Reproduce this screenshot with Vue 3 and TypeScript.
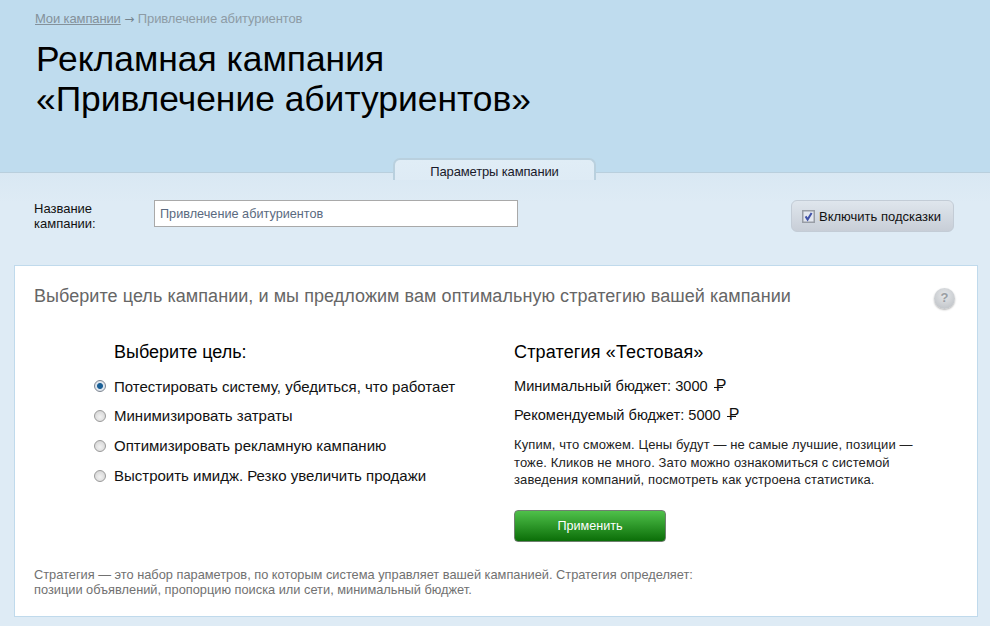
<script setup lang="ts">
interface Goal { label: string; checked: boolean }
const goals: Goal[] = [
  { label: 'Потестировать систему, убедиться, что работает', checked: true },
  { label: 'Минимизировать затраты', checked: false },
  { label: 'Оптимизировать рекламную кампанию', checked: false },
  { label: 'Выстроить имидж. Резко увеличить продажи', checked: false },
]
</script>

<template>
  <div class="page">
    <header class="head">
      <div class="crumbs"><a class="crumb-link">Мои кампании</a> <span class="arrow">→</span> Привлечение абитуриентов</div>
      <h1 class="title">Рекламная кампания<br />«Привлечение абитуриентов»</h1>
      <div class="tab">Параметры кампании</div>
    </header>

    <main class="body">
      <div class="form-row">
        <label class="name-label">Название<br />кампании:</label>
        <div class="name-input">Привлечение абитуриентов</div>
        <div class="hints">
          <svg class="check" width="13" height="13" viewBox="0 0 13 13">
            <rect x="0.75" y="0.75" width="11.5" height="11.5" fill="#e3e7ef" stroke="#989da5" stroke-width="1.5" />
            <path d="M3.6 6.4 L5.6 9.6 L9.6 3" fill="none" stroke="#4052a8" stroke-width="2" />
          </svg>
          <span>Включить подсказки</span>
        </div>
      </div>

      <section class="card">
        <div class="card-head">
          <h2 class="card-title">Выберите цель кампании, и мы предложим вам оптимальную стратегию вашей кампании</h2>
          <span class="help">?</span>
        </div>

        <div class="cols">
          <div class="col-left">
            <h3 class="col-title">Выберите цель:</h3>
            <ul class="goals">
              <li v-for="g in goals" :key="g.label" class="goal">
                <span class="radio" :class="{ on: g.checked }"></span>
                <span>{{ g.label }}</span>
              </li>
            </ul>
          </div>
          <div class="col-right">
            <h3 class="col-title wide">Стратегия «Тестовая»</h3>
            <p class="budget">Минимальный бюджет: 3000 <span class="rub">Р</span></p>
            <p class="budget">Рекомендуемый бюджет: 5000 <span class="rub">Р</span></p>
            <p class="desc">Купим, что сможем. Цены будут — не самые лучшие, позиции — тоже. Кликов не много. Зато можно ознакомиться с системой заведения компаний, посмотреть как устроена статистика.</p>
            <button class="apply" type="button">Применить</button>
          </div>
        </div>

        <p class="foot">Стратегия — это набор параметров, по которым система управляет вашей кампанией. Стратегия определяет:<br />позиции объявлений, пропорцию поиска или сети, минимальный бюджет.</p>
      </section>
    </main>
  </div>
</template>

<style>
html, body { margin: 0; padding: 0; background: #deebf5; }
</style>

<style scoped>
.page {
  width: 990px;
  height: 626px;
  overflow: hidden;
  font-family: "Liberation Sans", Arial, sans-serif;
  background: #deebf5;
  color: #000;
}
.head {
  height: 173px;
  box-sizing: border-box;
  padding: 11px 0 0 35px;
  background: #bfdcee;
  border-bottom: 1px solid #b9cfdd;
  display: flex;
  flex-direction: column;
  position: relative;
}
.crumbs {
  font-size: 13px;
  letter-spacing: -0.12px;
  line-height: 15px;
  color: #8d9ba5;
}
.crumb-link { text-decoration: underline; color: #84919a; }
.arrow {
  font-family: "DejaVu Sans", sans-serif;
  font-size: 12px;
  letter-spacing: 0;
  color: #75848f;
}
.title {
  margin: 12px 0 0 1px;
  font-size: 35.4px;
  font-weight: 400;
  line-height: 40px;
  color: #000;
}
.tab {
  position: absolute;
  left: 393px;
  top: 158px;
  width: 203px;
  height: 22px;
  box-sizing: border-box;
  border: 2px solid #b9d0de;
  border-bottom: 0;
  border-radius: 7px 7px 0 0;
  background: linear-gradient(#e0edf6, #deebf5);
  font-size: 13px;
  letter-spacing: -0.15px;
  line-height: 23px;
  text-align: center;
  color: #1a1a2a;
  z-index: 1;
}
.body {
  background: linear-gradient(#d9e8f3 0, #deebf5 30px);
  height: 453px;
  box-sizing: border-box;
  padding: 27px 12px 0 14px;
}
.form-row {
  display: flex;
  align-items: flex-start;
  height: 65px;
}
.name-label {
  width: 140px;
  box-sizing: border-box;
  padding: 1px 0 0 20px;
  font-size: 13px;
  line-height: 15px;
  color: #111;
}
.name-input {
  width: 364px;
  height: 27px;
  box-sizing: border-box;
  border: 1px solid #a9a9a9;
  background: #fff;
  padding: 0 5px;
  font-size: 12.7px;
  line-height: 27px;
  color: #5a6a80;
}
.hints {
  margin-left: 273px;
  width: 163px;
  height: 32px;
  box-sizing: border-box;
  border: 1px solid #c3ccd6;
  border-radius: 6px;
  background: linear-gradient(#dfe6ed, #c8ced7);
  display: flex;
  align-items: center;
  gap: 4px;
  padding-left: 10px;
  font-size: 13px;
  color: #111;
}
.check { flex: none; }
.card {
  height: 352px;
  box-sizing: border-box;
  border: 1px solid #c0daec;
  background: #fff;
  padding: 0 19px;
  position: relative;
}
.card-head {
  display: flex;
  align-items: flex-start;
  justify-content: space-between;
  padding-top: 20px;
}
.card-title {
  margin: 0;
  font-size: 18px;
  letter-spacing: 0.06px;
  font-weight: 400;
  line-height: 20px;
  color: #666;
  white-space: nowrap;
}
.help {
  width: 21px;
  height: 21px;
  margin-right: 3px;
  margin-top: 2px;
  border-radius: 50%;
  background: radial-gradient(circle at 50% 35%, #e6e8ea, #b8bcc1);
  box-shadow: 0 1px 2px rgba(0, 0, 0, 0.3);
  color: #9a9ea3;
  font-size: 13px;
  font-weight: 700;
  line-height: 20px;
  text-align: center;
}
.cols {
  display: flex;
  margin-top: 33px;
  height: 200px;
}
.col-left {
  width: 480px;
  padding-left: 80px;
  box-sizing: border-box;
  flex: none;
}
.col-title {
  margin: 0;
  font-size: 18px;
  font-weight: 400;
  line-height: 20px;
  color: #000;
}
.col-title.wide { letter-spacing: 0.15px; }
.goals {
  list-style: none;
  margin: 9px 0 0;
  padding: 0;
}
.goal {
  display: flex;
  align-items: center;
  height: 30px;
  box-sizing: border-box;
  padding-bottom: 2px;
  font-size: 15px;
  color: #111;
  position: relative;
}
.goal:first-child { padding-bottom: 0; }
.radio {
  position: absolute;
  left: -20px;
  top: 9px;
  width: 10px;
  height: 10px;
  border-radius: 50%;
  border: 1px solid #9a9a9a;
  background: radial-gradient(circle at 50% 60%, #f2f2f2, #cfcfcf);
}
.radio.on {
  border-color: #7d8590;
  background: radial-gradient(circle, #1a5f96 0 2.5px, #dfe6ee 3.5px);
}
.col-right { width: 400px; flex: none; }
.budget {
  margin: 16px 0 0;
  height: 16px;
  font-size: 14.6px;
  line-height: 16px;
  color: #111;
}
.budget + .budget { margin-top: 13px; }
.rub {
  position: relative;
  display: inline-block;
  margin-left: 4px;
  font-size: 16px;
}
.rub::after {
  content: "";
  position: absolute;
  left: -2px;
  width: 9px;
  bottom: 6px;
  height: 1px;
  background: #111;
}
.desc {
  margin: 13px 0 0;
  font-size: 13px;
  letter-spacing: 0.1px;
  line-height: 17.5px;
  color: #222;
}
.apply {
  display: block;
  margin-top: 21.5px;
  width: 152px;
  height: 32px;
  border: 1px solid #6f7f6f;
  border-radius: 4px;
  background: linear-gradient(#4fc04a, #0b6e08);
  color: #fff;
  font-family: inherit;
  font-size: 12.6px;
  padding: 0;
}
.foot {
  margin: 25px 0 0;
  font-size: 12.8px;
  line-height: 15px;
  color: #717171;
}
</style>
